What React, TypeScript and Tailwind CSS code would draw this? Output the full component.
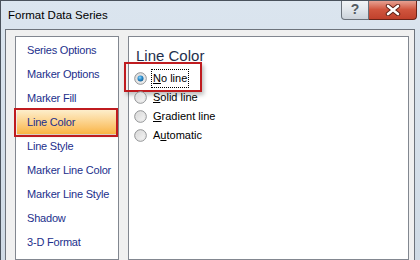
import React from 'react';

// ── Data ────────────────────────────────────────────────────────────────

const CATEGORIES = [
  'Series Options',
  'Marker Options',
  'Marker Fill',
  'Line Color',
  'Line Style',
  'Marker Line Color',
  'Marker Line Style',
  'Shadow',
  '3-D Format',
];

const OPTIONS: { pre: string; key: string; post: string; checked?: boolean }[] = [
  { pre: '', key: 'N', post: 'o line', checked: true },
  { pre: '', key: 'S', post: 'olid line' },
  { pre: '', key: 'G', post: 'radient line' },
  { pre: 'A', key: 'u', post: 'tomatic' },
];

const FONT = "font-['Liberation_Sans',Arial,sans-serif]";

// ── Radio glyph ─────────────────────────────────────────────────────────

const Radio: React.FC<{ checked?: boolean }> = ({ checked }) => (
  <svg width="13" height="13" viewBox="0 0 13 13" className="shrink-0">
    <defs>
      <linearGradient id="rg-off" x1="0" y1="0" x2="1" y2="1">
        <stop offset="0" stopColor="#d2d2d2" />
        <stop offset="1" stopColor="#fbfbfb" />
      </linearGradient>
      <radialGradient id="rg-on" cx="0.4" cy="0.35" r="0.7">
        <stop offset="0" stopColor="#8fd6fa" />
        <stop offset="0.5" stopColor="#2a8ed0" />
        <stop offset="1" stopColor="#145a8c" />
      </radialGradient>
    </defs>
    <circle cx="6.5" cy="6.5" r="5.8" fill="url(#rg-off)" stroke="#8f9193" strokeWidth="1" />
    <circle cx="6.5" cy="6.5" r="4.3" fill="none" stroke="#e4e4e4" strokeWidth="0.8" />
    {checked && <circle cx="6.5" cy="6.5" r="3" fill="url(#rg-on)" />}
  </svg>
);

// ── Main component ──────────────────────────────────────────────────────

export default function App() {
  return (
    <div className={`w-[420px] h-[260px] overflow-hidden bg-gradient-to-b from-[#dbe5ef] to-[#cfdae5] border-t border-l border-[#4a525c] flex flex-col ${FONT}`}>
      {/* Title bar */}
      <div className="h-[28px] shrink-0 flex justify-between">
        <div className="pl-[7px] pt-[6px] text-[11.5px] text-black whitespace-nowrap">Format Data Series</div>
        <div className="flex self-start mr-[3px] -mt-px">
          <div className="w-[28px] h-[20px] rounded-bl-[4px] border border-t-0 border-[#6a717a] bg-gradient-to-b from-[#f3f5f7] via-[#e2e7ec] to-[#cbd2da] flex items-center justify-center text-[14px] font-bold text-[#555b62]">
            ?
          </div>
          <div className="w-[48px] h-[20px] rounded-br-[4px] border border-t-0 border-l-0 border-[#6b2318] bg-gradient-to-b from-[#e8a89b] via-[#d0553e] to-[#c0412c] flex items-center justify-center">
            <svg width="16" height="12" viewBox="0 0 16 12">
              <path d="M3 2 L13 10 M13 2 L3 10" stroke="#5a1e14" strokeWidth="4.4" strokeLinecap="round" />
              <path d="M3 2 L13 10 M13 2 L3 10" stroke="#ffffff" strokeWidth="2.6" strokeLinecap="round" />
            </svg>
          </div>
        </div>
      </div>

      {/* Body */}
      <div className="flex-1 ml-[4px] mr-[5px] bg-[#f0f0f0] border-t border-l border-r border-[#6d737c] flex gap-[9px] pl-[9px] pt-[6px] pr-[5px]">
        {/* Category list */}
        <div className="w-[104px] shrink-0 bg-white border border-[#828790] pt-[1px] pl-px pr-px">
          {CATEGORIES.map((c) =>
            c === 'Line Color' ? (
              <div key={c} className="relative h-[24px]">
                <div className="h-full flex items-center pl-[10px] text-[11px] tracking-[-0.2px] whitespace-nowrap text-[#1c2f8c] bg-gradient-to-b from-[#fdeecb] via-[#fcd28a] to-[#f9b440] shadow-[0_2px_3px_rgba(120,90,40,0.35)]">
                  {c}
                </div>
                <div className="absolute -left-[3px] -right-[1px] -top-[2px] -bottom-[3px] border-2 border-[#bf1b1f]" />
              </div>
            ) : (
              <div key={c} className="h-[24px] flex items-center pl-[10px] text-[11px] tracking-[-0.2px] whitespace-nowrap text-[#1c2f8c]">
                {c}
              </div>
            )
          )}
        </div>

        {/* Settings panel */}
        <div className="flex-1 bg-white border border-[#828790] pl-[5px] pt-[8px]">
          <div className="pl-[2px] text-[15px] leading-[21px] text-[#1e2f4d]">Line Color</div>
          <div className="mt-[3px] flex flex-col">
            {OPTIONS.map((o) => (
              <div key={o.key} className="relative h-[19px] flex items-center gap-[5px] text-[11px] text-black whitespace-nowrap">
                <Radio checked={o.checked} />
                <span className={o.checked ? 'outline-1 outline-dotted outline-black px-px' : 'px-px'}>
                  {o.pre}
                  <span className="underline">{o.key}</span>
                  {o.post}
                </span>
                {o.checked && (
                  <div className="absolute -left-[10px] w-[78px] -top-[7px] -bottom-[4px] border-2 border-[#bf1b1f] shadow-[2px_3px_4px_rgba(0,0,0,0.25)]" />
                )}
              </div>
            ))}
          </div>
        </div>
      </div>
    </div>
  );
}
